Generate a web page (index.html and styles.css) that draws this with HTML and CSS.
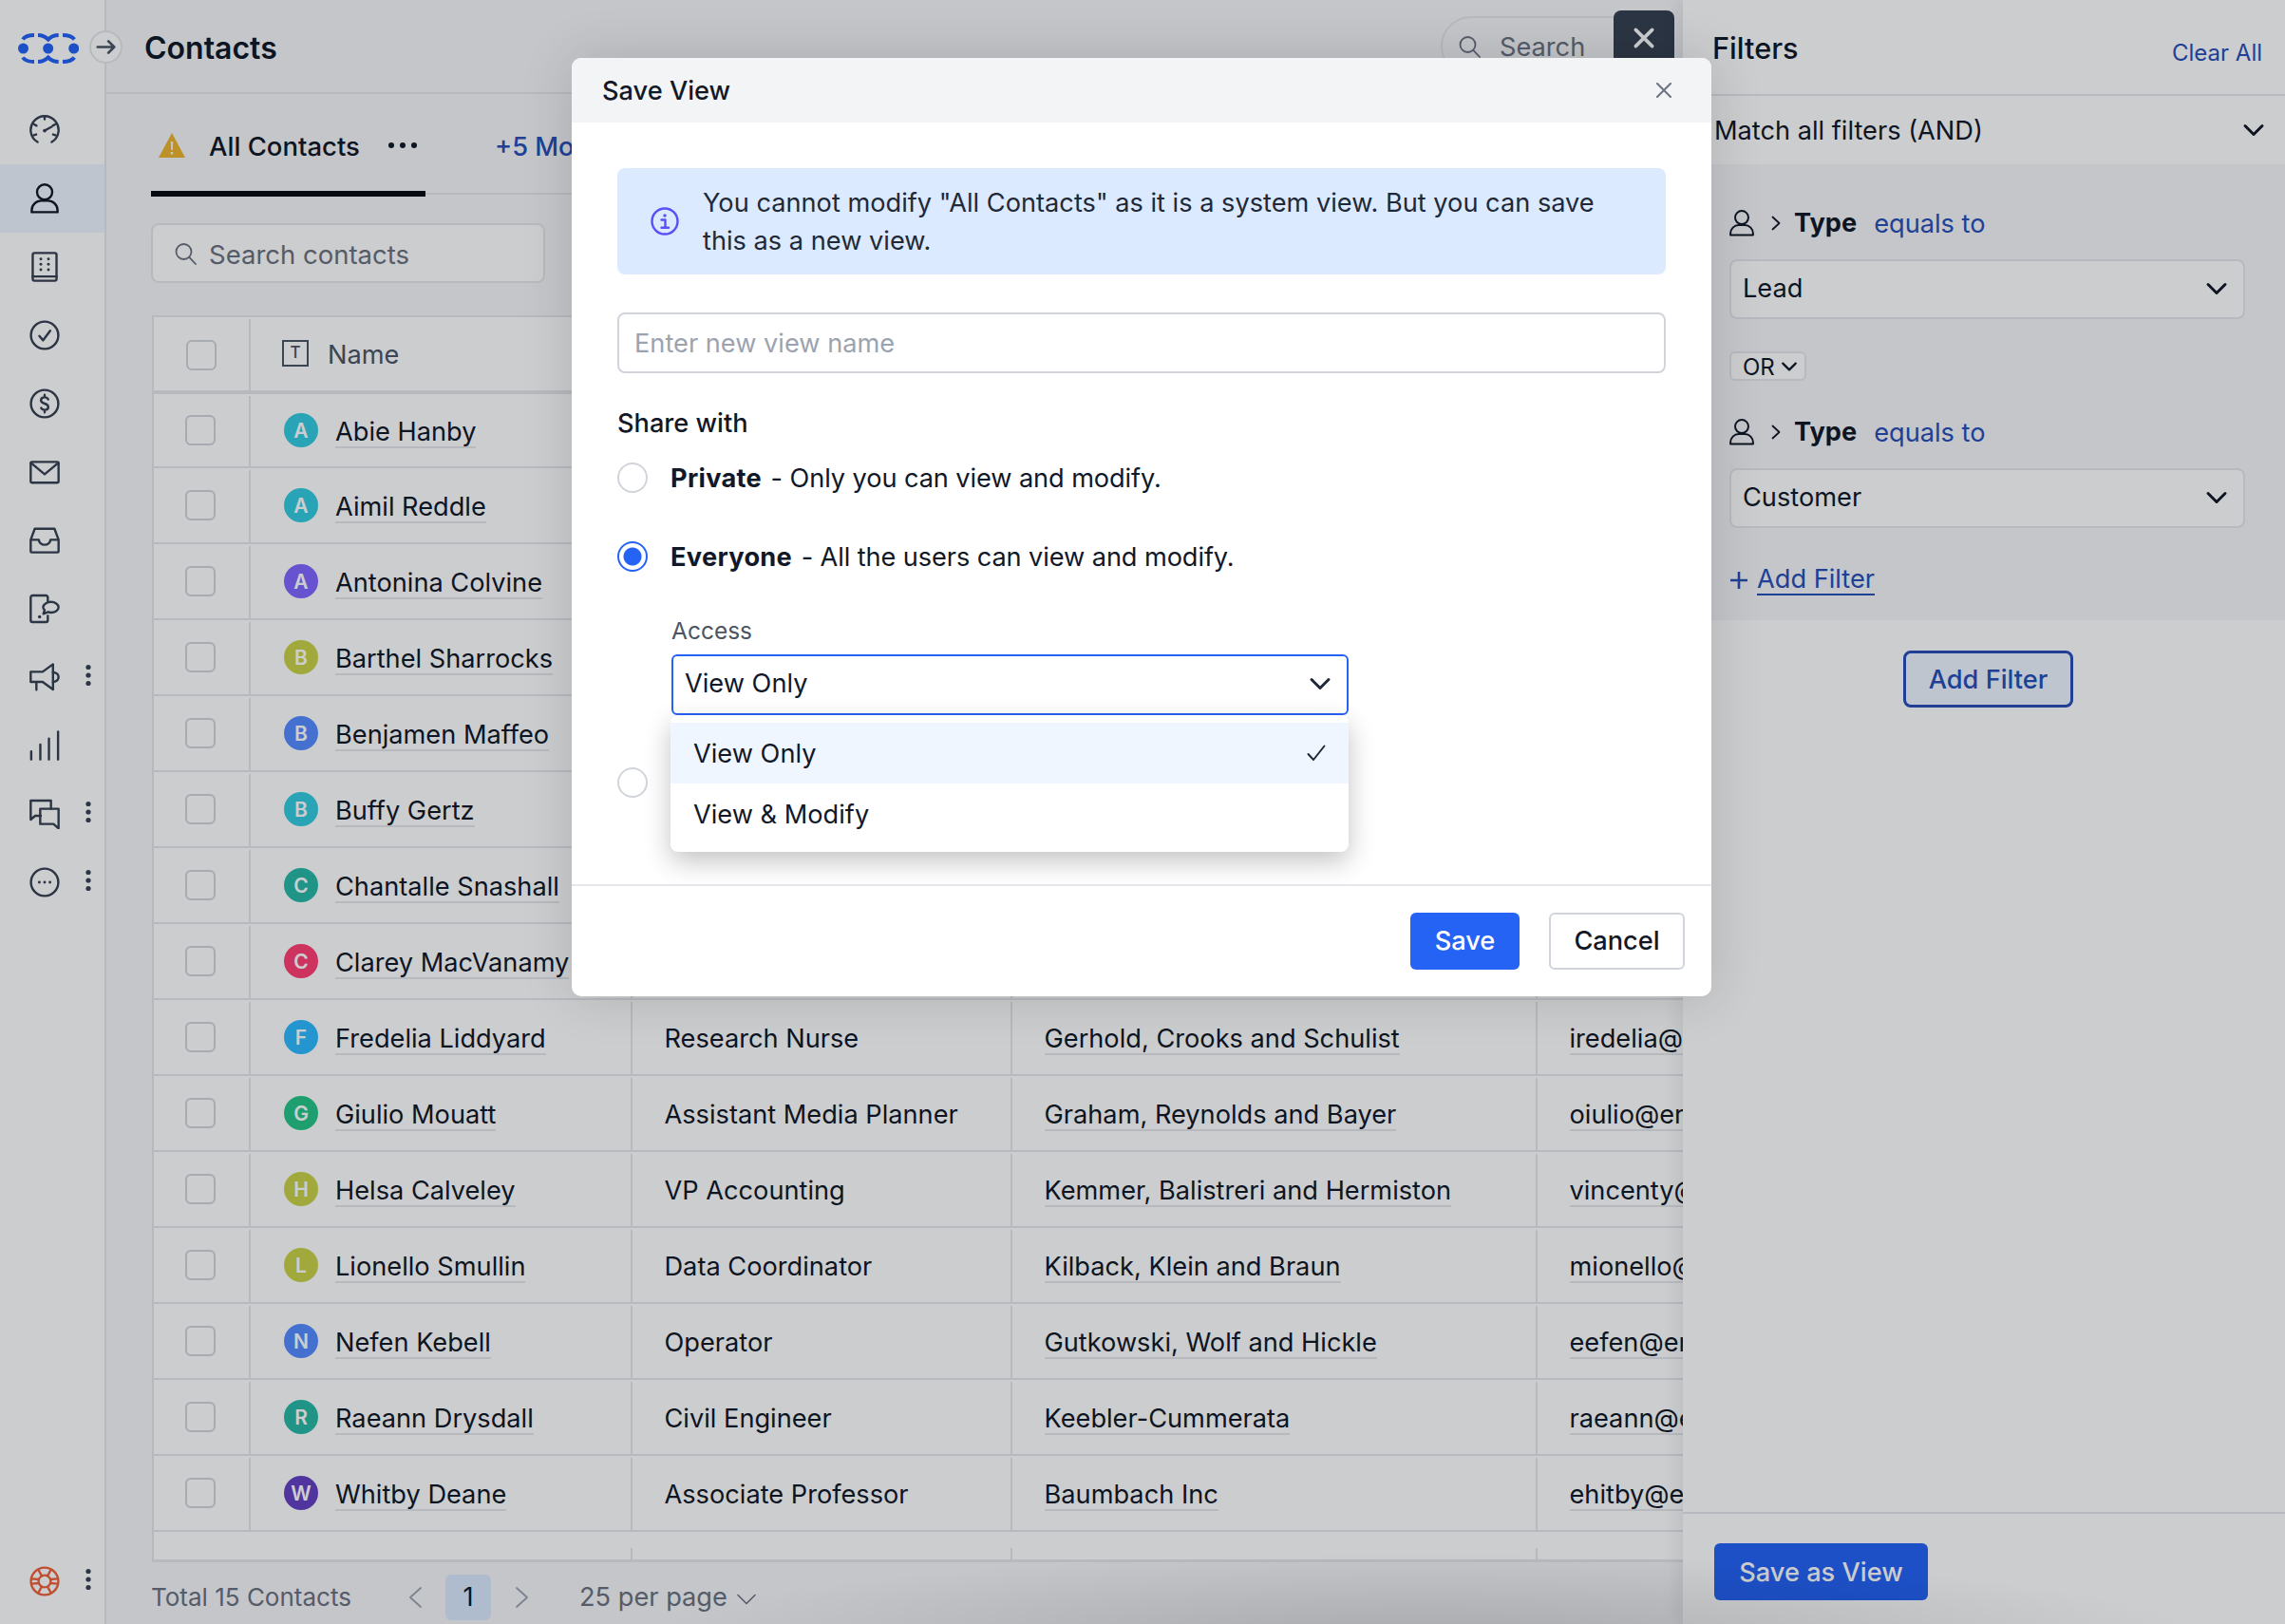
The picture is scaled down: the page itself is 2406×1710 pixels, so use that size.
FILE: index.html
```html
<!DOCTYPE html>
<html lang="en">
<head>
<meta charset="utf-8">
<title>Contacts</title>
<link rel="stylesheet" href="styles.css">
</head>
<body>
<svg class="defs" aria-hidden="true">
  <symbol id="i-gauge" viewBox="0 0 24 24"><path d="M6.400 21.400A11 11 0 1 1 17.600 21.400"/><path d="M12 1v2.400M3.800 7.500l1.800 1M20.200 7.500l-1.800 1M3.400 16l1.900-.6M20.600 16l-1.900-.6M12 12.400l5.500-3"/><circle cx="12" cy="12.400" r="1.400" class="fill"/></symbol>
  <symbol id="i-person" viewBox="0 0 24 24"><circle cx="12" cy="6.900" r="6"/><path d="M1.800 22.800h20.400v-1.500a7.500 7.500 0 0 0-7.500-7.500H9.300a7.500 7.500 0 0 0-7.500 7.500z"/></symbol>
  <symbol id="i-building" viewBox="0 0 24 24"><rect x="2.600" y="1" width="18.800" height="22" rx="1.400"/><path d="M2.600 19.600h18.800"/><circle cx="9" cy="5.800" r="1.100" class="fill"/><circle cx="15" cy="5.800" r="1.100" class="fill"/><circle cx="9" cy="10" r="1.100" class="fill"/><circle cx="15" cy="10" r="1.100" class="fill"/><circle cx="9" cy="14.200" r="1.100" class="fill"/><circle cx="15" cy="14.200" r="1.100" class="fill"/></symbol>
  <symbol id="i-check" viewBox="0 0 24 24"><circle cx="12" cy="12" r="10.800"/><path d="M7.800 12.600l3 3.400 5.600-7.600"/></symbol>
  <symbol id="i-dollar" viewBox="0 0 24 24"><circle cx="12" cy="12" r="10.800"/><path d="M14.800 8.600c-.5-1-1.500-1.600-2.800-1.600-1.600 0-2.900.9-2.900 2.400 0 3.300 5.800 1.900 5.800 5.200 0 1.500-1.300 2.400-2.900 2.400-1.300 0-2.300-.6-2.800-1.600M12 5v2m0 10v2"/></symbol>
  <symbol id="i-mail" viewBox="0 0 24 24"><rect x="1" y="4" width="22" height="16.400" rx="1"/><path d="M1.200 4.800 12 13.800 22.800 4.800"/></symbol>
  <symbol id="i-inbox" viewBox="0 0 24 24"><path d="M1 11.500 4.200 2.800h15.600l3.200 8.700v9a1 1 0 0 1-1 1H2a1 1 0 0 1-1-1zM1 11.500h6.400c0 2.200 2.100 4 4.600 4s4.600-1.800 4.600-4H23"/></symbol>
  <symbol id="i-phone" viewBox="0 0 24 24"><path d="M14.500 6V3a1.500 1.500 0 0 0-1.500-1.500H2.500A1.500 1.500 0 0 0 1 3v18a1.500 1.500 0 0 0 1.500 1.500H13a1.500 1.500 0 0 0 1.500-1.500v-3.500"/><path d="M17 6.600c3.100 0 6 1.800 6 4.200S20.100 15 17 15c-.8 0-1.500-.1-2.200-.4L11 16l1-3c-.7-.7-1.200-1.500-1.200-2.200 0-2.400 3.100-4.200 6.200-4.200z"/><circle cx="8" cy="18.400" r="1.300" class="fill"/></symbol>
  <symbol id="i-mega" viewBox="0 0 24 24"><path d="M1 7.800h9.400l8.200-6v20l-8.200-6H1z"/><path d="M5.500 16v6M18.600 8c2.800.6 4.400 2.200 4.400 4s-1.600 3.400-4.400 4"/></symbol>
  <symbol id="i-bars" viewBox="0 0 24 24"><path d="M1.400 23v-6.400M8.600 23V11.300M15.400 23V6.600M22.600 23V1"/></symbol>
  <symbol id="i-chat" viewBox="0 0 24 24"><path d="M17 8V1.500H1v15l3.500-3H9"/><path d="M8.500 8H23v15.500L19 20H8.500z"/></symbol>
  <symbol id="i-more" viewBox="0 0 24 24"><circle cx="12" cy="12" r="10.800"/><circle cx="7.800" cy="12" r="1.100" class="fill"/><circle cx="12" cy="12" r="1.100" class="fill"/><circle cx="16.200" cy="12" r="1.100" class="fill"/></symbol>
  <symbol id="i-help" viewBox="0 0 24 24"><circle cx="12" cy="12" r="10.800"/><circle cx="12" cy="12" r="4.800"/><path d="M9.700 7.800 7 2.800M14.300 7.800 17 2.800M9.700 16.200 7 21.200M14.300 16.200 17 21.200M7.400 10.500 1.800 10M7.400 13.500 1.800 14M16.600 10.500 22.200 10M16.600 13.500 22.200 14"/></symbol>
  <symbol id="i-search" viewBox="0 0 24 24"><circle cx="10.500" cy="10" r="8"/><path d="M16.300 15.800 23 23"/></symbol>
  <symbol id="i-down" viewBox="0 0 24 24"><path d="M3 7.500l9 9 9-9"/></symbol>
  <symbol id="i-kebab" viewBox="0 0 8 24"><circle cx="4" cy="3.500" r="2.600" class="fill"/><circle cx="4" cy="12" r="2.600" class="fill"/><circle cx="4" cy="20.500" r="2.600" class="fill"/></symbol>
</svg>

<div class="app">
  <aside class="sidebar">
    <div class="brand">
      <svg class="logo" viewBox="0 0 64 32"><path class="logo-ring" d="M5 6.500Q8 2 17 2M21 2Q27 2 31.700 6.500 36 2 42.700 2M47 2Q56 2 59.300 6.500M5 25.500Q8 30 17 30M21 30Q27 30 31.700 25.500 36 30 42.700 30M47 30Q56 30 59.300 25.500"/><circle cx="5.500" cy="16" r="5.500"/><circle cx="31.700" cy="16" r="5.500"/><circle cx="58.700" cy="16" r="5.500"/></svg>
      <span class="expander"><svg viewBox="0 0 24 24"><path d="M2 12h20M15 5l7 7-7 7"/></svg></span>
    </div>
    <nav class="nav">
      <a class="nav-item"><svg class="icon"><use href="#i-gauge"/></svg></a>
      <a class="nav-item active"><svg class="icon"><use href="#i-person"/></svg></a>
      <a class="nav-item"><svg class="icon"><use href="#i-building"/></svg></a>
      <a class="nav-item"><svg class="icon"><use href="#i-check"/></svg></a>
      <a class="nav-item"><svg class="icon"><use href="#i-dollar"/></svg></a>
      <a class="nav-item"><svg class="icon"><use href="#i-mail"/></svg></a>
      <a class="nav-item"><svg class="icon"><use href="#i-inbox"/></svg></a>
      <a class="nav-item"><svg class="icon"><use href="#i-phone"/></svg></a>
      <a class="nav-item"><svg class="icon"><use href="#i-mega"/></svg><svg class="kebab"><use href="#i-kebab"/></svg></a>
      <a class="nav-item"><svg class="icon"><use href="#i-bars"/></svg></a>
      <a class="nav-item"><svg class="icon"><use href="#i-chat"/></svg><svg class="kebab"><use href="#i-kebab"/></svg></a>
      <a class="nav-item"><svg class="icon"><use href="#i-more"/></svg><svg class="kebab"><use href="#i-kebab"/></svg></a>
    </nav>
    <a class="nav-item help"><svg class="icon help-icon"><use href="#i-help"/></svg><svg class="kebab"><use href="#i-kebab"/></svg></a>
  </aside>

  <main class="main">
    <header class="topbar">
      <h1 class="page-title">Contacts</h1>
      <div class="top-actions">
        <div class="pill-search"><svg class="pill-icon"><use href="#i-search"/></svg><span>Search</span></div>
        <button class="close-dark"><svg viewBox="0 0 24 24"><path d="M4 4l16 16M20 4 4 20"/></svg></button>
      </div>
    </header>

    <div class="tabs">
      <div class="tab">
        <svg class="warn" viewBox="0 0 28 26"><path d="M14 0 28 26H0z" class="warn-bg"/><path d="M12.800 9h2.400l-.4 9h-1.600zM12.800 20h2.400v2.600h-2.400z" class="warn-fg"/></svg>
        <span class="tab-label">All Contacts</span>
        <span class="tab-dots"><i></i><i></i><i></i></span>
      </div>
      <span class="tab-more">+5 More</span>
    </div>

    <div class="search-box"><svg class="search-icon"><use href="#i-search"/></svg><span>Search contacts</span></div>

    <section class="table">
      <div class="row head">
        <div class="cell cell-check"><span class="cb"></span></div>
        <div class="cell cell-name"><span class="t-icon">T</span><span>Name</span></div>
        <div class="cell"></div><div class="cell"></div><div class="cell"></div>
      </div>
      <div class="row first"><div class="cell cell-check"><span class="cb"></span></div><div class="cell cell-name"><span class="av c-teal">A</span><a class="lnk">Abie Hanby</a></div><div class="cell"></div><div class="cell"></div><div class="cell"></div></div>
      <div class="row"><div class="cell cell-check"><span class="cb"></span></div><div class="cell cell-name"><span class="av c-teal">A</span><a class="lnk">Aimil Reddle</a></div><div class="cell"></div><div class="cell"></div><div class="cell"></div></div>
      <div class="row"><div class="cell cell-check"><span class="cb"></span></div><div class="cell cell-name"><span class="av c-purple">A</span><a class="lnk">Antonina Colvine</a></div><div class="cell"></div><div class="cell"></div><div class="cell"></div></div>
      <div class="row"><div class="cell cell-check"><span class="cb"></span></div><div class="cell cell-name"><span class="av c-olive">B</span><a class="lnk">Barthel Sharrocks</a></div><div class="cell"></div><div class="cell"></div><div class="cell"></div></div>
      <div class="row"><div class="cell cell-check"><span class="cb"></span></div><div class="cell cell-name"><span class="av c-blue">B</span><a class="lnk">Benjamen Maffeo</a></div><div class="cell"></div><div class="cell"></div><div class="cell"></div></div>
      <div class="row"><div class="cell cell-check"><span class="cb"></span></div><div class="cell cell-name"><span class="av c-teal">B</span><a class="lnk">Buffy Gertz</a></div><div class="cell"></div><div class="cell"></div><div class="cell"></div></div>
      <div class="row"><div class="cell cell-check"><span class="cb"></span></div><div class="cell cell-name"><span class="av c-green">C</span><a class="lnk">Chantalle Snashall</a></div><div class="cell"></div><div class="cell"></div><div class="cell"></div></div>
      <div class="row"><div class="cell cell-check"><span class="cb"></span></div><div class="cell cell-name"><span class="av c-red">C</span><a class="lnk">Clarey MacVanamy</a></div><div class="cell"></div><div class="cell"></div><div class="cell"></div></div>
      <div class="row"><div class="cell cell-check"><span class="cb"></span></div><div class="cell cell-name"><span class="av c-sky">F</span><a class="lnk">Fredelia Liddyard</a></div><div class="cell">Research Nurse</div><div class="cell"><a class="lnk">Gerhold, Crooks and Schulist</a></div><div class="cell"><a class="lnk">iredelia@erdman.com</a></div></div>
      <div class="row"><div class="cell cell-check"><span class="cb"></span></div><div class="cell cell-name"><span class="av c-emerald">G</span><a class="lnk">Giulio Mouatt</a></div><div class="cell">Assistant Media Planner</div><div class="cell"><a class="lnk">Graham, Reynolds and Bayer</a></div><div class="cell"><a class="lnk">oiulio@erdman.com</a></div></div>
      <div class="row"><div class="cell cell-check"><span class="cb"></span></div><div class="cell cell-name"><span class="av c-olive">H</span><a class="lnk">Helsa Calveley</a></div><div class="cell">VP Accounting</div><div class="cell"><a class="lnk">Kemmer, Balistreri and Hermiston</a></div><div class="cell"><a class="lnk">vincenty@erdman.com</a></div></div>
      <div class="row"><div class="cell cell-check"><span class="cb"></span></div><div class="cell cell-name"><span class="av c-olive">L</span><a class="lnk">Lionello Smullin</a></div><div class="cell">Data Coordinator</div><div class="cell"><a class="lnk">Kilback, Klein and Braun</a></div><div class="cell"><a class="lnk">mionello@erdman.com</a></div></div>
      <div class="row"><div class="cell cell-check"><span class="cb"></span></div><div class="cell cell-name"><span class="av c-blue">N</span><a class="lnk">Nefen Kebell</a></div><div class="cell">Operator</div><div class="cell"><a class="lnk">Gutkowski, Wolf and Hickle</a></div><div class="cell"><a class="lnk">eefen@erdman.com</a></div></div>
      <div class="row"><div class="cell cell-check"><span class="cb"></span></div><div class="cell cell-name"><span class="av c-green">R</span><a class="lnk">Raeann Drysdall</a></div><div class="cell">Civil Engineer</div><div class="cell"><a class="lnk">Keebler-Cummerata</a></div><div class="cell"><a class="lnk">raeann@erdman.com</a></div></div>
      <div class="row"><div class="cell cell-check"><span class="cb"></span></div><div class="cell cell-name"><span class="av c-violet">W</span><a class="lnk">Whitby Deane</a></div><div class="cell">Associate Professor</div><div class="cell"><a class="lnk">Baumbach Inc</a></div><div class="cell"><a class="lnk">ehitby@erdman.com</a></div></div>
      <div class="row blank"><div class="stub"></div><div class="stub on"></div><div class="stub on"></div><div class="stub on"></div><div class="stub"></div></div>
    </section>

    <footer class="pager">
      <span class="total">Total 15 Contacts</span>
      <svg class="pg-chev prev" viewBox="0 0 15 22"><path d="M13 1 2 11l11 10"/></svg>
      <span class="page-num">1</span>
      <svg class="pg-chev next" viewBox="0 0 15 22"><path d="M2 1l11 10L2 21"/></svg>
      <span class="per-page">25 per page</span>
      <svg class="pp-chev"><use href="#i-down"/></svg>
    </footer>
  </main>

  <aside class="panel">
    <div class="panel-head"><span class="panel-title">Filters</span><a class="clear">Clear All</a></div>
    <div class="match"><span>Match all filters (AND)</span><svg class="chev"><use href="#i-down"/></svg></div>
    <div class="group">
      <div class="frow"><svg class="f-person"><use href="#i-person"/></svg><svg class="f-gt" viewBox="0 0 10 16"><path d="M1.500 1.500 8.500 8l-7 6.500"/></svg><b class="f-type">Type</b><span class="f-op">equals to</span></div>
      <div class="fselect"><span>Lead</span><svg class="chev"><use href="#i-down"/></svg></div>
      <div class="or"><span>OR</span><svg class="or-chev"><use href="#i-down"/></svg></div>
      <div class="frow second"><svg class="f-person"><use href="#i-person"/></svg><svg class="f-gt" viewBox="0 0 10 16"><path d="M1.500 1.500 8.500 8l-7 6.500"/></svg><b class="f-type">Type</b><span class="f-op">equals to</span></div>
      <div class="fselect"><span>Customer</span><svg class="chev"><use href="#i-down"/></svg></div>
      <div class="add-link"><svg class="plus" viewBox="0 0 20 20"><path d="M10 1v18M1 10h18"/></svg><a>Add Filter</a></div>
    </div>
    <button class="add-btn">Add Filter</button>
    <div class="panel-foot"><button class="save-as">Save as View</button></div>
  </aside>
</div>

<div class="scrim"><div class="scrim-shade"></div></div>

<div class="modal">
  <div class="modal-head"><span>Save View</span><svg class="modal-x" viewBox="0 0 16 16"><path d="M1 1l14 14M15 1 1 15"/></svg></div>
  <div class="modal-body">
    <div class="notice">
      <svg class="info" viewBox="0 0 30 30"><circle cx="15" cy="15" r="13.500"/><circle cx="15" cy="9" r="1.700" class="info-dot"/><path d="M11.500 13.500H15.500V21.500M11.500 21.800H19"/></svg>
      <p>You cannot modify "All Contacts" as it is a system view. But you can save<br>this as a new view.</p>
    </div>
    <div class="name-input">Enter new view name</div>
    <div class="share">Share with</div>
    <div class="opt opt-private"><span class="radio"></span><span class="opt-text"><b>Private</b> - Only you can view and modify.</span></div>
    <div class="opt opt-everyone"><span class="radio on"></span><span class="opt-text"><b>Everyone</b> - All the users can view and modify.</span></div>
    <div class="access">
      <div class="access-label">Access</div>
      <div class="access-select"><span>View Only</span><svg class="chev strong"><use href="#i-down"/></svg>
        <div class="menu">
          <div class="menu-item selected"><span>View Only</span><svg class="tick" viewBox="0 0 20 20"><path d="M1.500 11 7 17 18.500 2.500"/></svg></div>
          <div class="menu-item"><span>View &amp; Modify</span></div>
        </div>
      </div>
    </div>
    <div class="opt opt-third"><span class="radio"></span></div>
  </div>
  <div class="modal-foot"><button class="btn-save">Save</button><button class="btn-cancel">Cancel</button></div>
</div>
</body>
</html>
```

FILE: styles.css
```css
* { box-sizing: border-box; }
html, body { margin: 0; padding: 0; }
body {
  position: relative;
  width: 2406px;
  height: 1710px;
  overflow: hidden;
  background: #fff;
  color: #111827;
  font-family: Inter, "Liberation Sans", sans-serif;
  font-size: 27.2px;
  line-height: 40px;
}
h1, p { margin: 0; font: inherit; }
button { font: inherit; cursor: pointer; }
.defs { position: absolute; width: 0; height: 0; }
symbol { fill: none; stroke: currentColor; stroke-width: var(--sw, 1.8); stroke-linecap: round; stroke-linejoin: round; }
.fill { fill: currentColor; stroke: none; }
svg { display: block; flex: none; }

.app { display: flex; height: 1710px; }

/* sidebar */
.sidebar {
  position: relative;
  z-index: 2;
  display: flex;
  flex-direction: column;
  width: 112px;
  flex: none;
  background: #fff;
  border-right: 2px solid #e5e7eb;
  color: #374151;
}
.brand { position: relative; height: 101px; }
.logo { position: absolute; left: 19px; top: 35px; width: 64px; height: 32px; fill: #2563f5; }
.logo-ring { fill: none; stroke: #2563f5; stroke-width: 4; }
.expander {
  position: absolute;
  left: 94px;
  top: 32px;
  display: flex;
  align-items: center;
  justify-content: center;
  width: 35px;
  height: 35px;
  border: 2px solid #e5e7eb;
  border-radius: 50%;
  background: #fff;
}
.expander svg { width: 21px; height: 21px; fill: none; stroke: #4b5563; stroke-width: 3; stroke-linecap: round; stroke-linejoin: round; }
.nav-item { display: flex; align-items: center; height: 72px; padding-left: 31px; }
.nav-item.active { background: #eff6ff; color: #111827; }
.icon { width: 32px; height: 32px; }
.kebab { width: 8px; height: 24px; margin-left: 26px; margin-top: -5px; color: #374151; }
.help { margin-top: auto; margin-bottom: 9px; }
.help-icon { color: #f0623a; }

/* main */
.main { flex: 1; min-width: 0; overflow: hidden; background: #f6f7f9; }
.topbar {
  display: flex;
  justify-content: space-between;
  height: 99px;
  padding-left: 40px;
  padding-right: 9px;
  border-bottom: 2px solid #e5e7eb;
}
.page-title { align-self: center; padding-top: 4px; font-size: 32px; font-weight: 600; line-height: 40px; }
.top-actions { display: flex; align-items: flex-start; padding-top: 11px; }
.pill-search {
  display: flex;
  align-items: center;
  gap: 20px;
  width: 220px;
  height: 64px;
  margin-top: 6px;
  padding-left: 16px;
  border: 2px solid #e5e7eb;
  border-radius: 32px;
  color: #6b7280;
}
.pill-search span { padding-top: 2px; }
.pill-icon { width: 24px; height: 24px; }
.close-dark {
  display: flex;
  align-items: center;
  justify-content: center;
  position: relative;
  width: 64px;
  height: 64px;
  margin-left: -38px;
  padding: 0;
  border: 0;
  border-radius: 8px;
  background: #374151;
}
.close-dark svg { width: 26px; height: 26px; margin-top: -6px; fill: none; stroke: #fff; stroke-width: 3.4; stroke-linecap: round; }

.tabs { display: flex; height: 106px; margin-left: 47px; border-bottom: 2px solid #e5e7eb; }
.tab {
  display: flex;
  align-items: center;
  width: 289px;
  height: 108px;
  padding: 6px 0 0 8px;
  border-bottom: 6px solid #0b0c12;
}
.warn { width: 28px; height: 26px; }
.warn-bg { fill: #edb52f; }
.warn-fg { fill: #f6f7f9; }
.tab-label { margin-left: 25px; padding-top: 2px; font-size: 27.5px; font-weight: 500; }
.tab-dots { display: flex; gap: 6px; margin-left: 30px; }
.tab-dots i { width: 6px; height: 6px; border-radius: 50%; background: #111827; }
.tab-more { align-self: center; padding-top: 8px; margin-left: 73px; color: #274fb7; font-weight: 500; white-space: nowrap; }

.search-box {
  display: flex;
  align-items: center;
  gap: 13px;
  width: 415px;
  height: 63px;
  margin: 30px 0 0 47px;
  padding-left: 22px;
  border: 2px solid #e5e7eb;
  border-radius: 8px;
  background: #fff;
  color: #6b7280;
  font-size: 27.5px;
}
.search-box span { margin-top: 3px; }
.search-icon { width: 24px; height: 24px; }

/* table */
.table { width: 2460px; margin: 34px 0 0 48px; border-left: 2px solid #e5e7eb; border-top: 2px solid #e5e7eb; background: #fff; }
.row {
  display: grid;
  grid-template-columns: 102px 401.5px 400px 553px 1001.5px;
  height: 80px;
  border-bottom: 2px solid #e5e7eb;
}
.row.head { height: 81px; border-bottom-width: 4px; color: #4b5563; }
.row.first { height: 78px; }
.cell {
  display: flex;
  align-items: center;
  margin: 2px 0 0;
  padding: 2px 0 0 34px;
  border-right: 2px solid #e5e7eb;
  white-space: nowrap;
  overflow: hidden;
}
.cell:last-child { border-right: 0; }
.cell-check { padding-left: 33px; }
.cell-name { padding-left: 35px; }
.cb { width: 32px; height: 32px; margin-top: -4px; border: 2px solid #d1d5db; border-radius: 6px; background: #fff; }
.row.head .cb { margin-top: -2px; margin-left: 1px; }
.t-icon {
  display: flex;
  align-items: center;
  justify-content: center;
  width: 28px;
  height: 28px;
  margin: -4px 20px 0 -2px;
  border: 2px solid #4b5563;
  font-size: 17px;
  font-weight: 500;
  line-height: 1;
}
.row.head .cell-name { padding-top: 0; }
.av {
  display: flex;
  flex: none;
  align-items: center;
  justify-content: center;
  width: 36px;
  height: 36px;
  margin: -4px 18px 0 0;
  border-radius: 50%;
  color: #fff;
  font-size: 21px;
  font-weight: 600;
  line-height: 1;
}
.c-teal { background: #34cce0; }
.c-purple { background: #8167ff; }
.c-olive { background: #cad148; }
.c-blue { background: #558dff; }
.c-green { background: #29b8a6; }
.c-red { background: #ff3f72; }
.c-sky { background: #2fb9ff; }
.c-emerald { background: #27c687; }
.c-violet { background: #6641c2; }
.lnk { display: block; margin-top: 1px; line-height: 30px; border-bottom: 2px solid #e5e7eb; }
.row.blank { height: 32px; border-bottom-width: 3px; }
.stub { border-right: 2px solid transparent; margin-top: 17px; }
.stub.on { border-right-color: #e5e7eb; }

.pager { display: flex; align-items: center; height: 65px; margin-left: 47px; padding-top: 8px; color: #6b7280; }
.total { width: 210px; font-size: 26px; white-space: nowrap; }
.pg-chev { width: 15px; height: 22px; fill: none; stroke: #9ca3af; stroke-width: 1.8; stroke-linecap: round; stroke-linejoin: round; }
.prev { margin-left: 61px; }
.page-num {
  display: flex;
  align-items: center;
  justify-content: center;
  width: 48px;
  height: 48px;
  margin-left: 24px;
  border-radius: 6px;
  background: #dbeafe;
  color: #111827;
}
.next { margin-left: 25px; }
.per-page { margin-left: 53px; }
.pp-chev { width: 24px; height: 24px; margin-left: 8px; margin-top: 4px; color: #6b7280; --sw: 1.6; }

/* filter panel */
.panel {
  position: relative;
  z-index: 3;
  display: flex;
  flex-direction: column;
  width: 634px;
  flex: none;
  background: #fff;
  box-shadow: -6px 0 16px rgba(17, 24, 39, .08);
}
.panel-head {
  display: flex;
  justify-content: space-between;
  align-items: center;
  height: 101px;
  padding: 0 24px 0 31px;
  border-bottom: 2px solid #e5e7eb;
}
.panel-title { padding-top: 2px; font-size: 30.7px; font-weight: 500; }
.clear { margin-top: 12px; color: #274fb7; font-size: 24px; }
.match { display: flex; justify-content: space-between; align-items: center; height: 72px; padding: 0 21px 0 33px; }
.match span { padding-top: 2px; }
.chev { width: 24px; height: 24px; color: #111827; --sw: 3; }
.group { height: 480px; padding: 44px 42px 0 49px; background: #f6f7f9; }
.frow { display: flex; align-items: center; height: 36px; }
.frow.second { margin-top: 36px; }
.f-person { width: 28px; height: 28px; color: #111827; margin-left: -1px; --sw: 1.7; }
.f-gt { width: 10px; height: 16px; margin-left: 17px; fill: none; stroke: #111827; stroke-width: 1.8; stroke-linecap: round; stroke-linejoin: round; }
.f-type { margin-left: 14px; font-weight: 700; }
.f-op { margin-left: 18px; padding-top: 2px; color: #274fb7; }
.fselect {
  display: flex;
  justify-content: space-between;
  align-items: center;
  height: 63px;
  margin-top: 20px;
  padding: 0 16px 2px 12px;
  border: 2px solid #e5e7eb;
  border-radius: 8px;
  background: #fff;
}
.or {
  display: flex;
  align-items: center;
  gap: 6px;
  width: 81px;
  height: 31px;
  margin-top: 34px;
  padding-left: 12px;
  border: 2px solid #e5e7eb;
  border-radius: 6px;
  background: #fff;
  font-size: 24px;
}
.or span { padding-top: 3px; }
.or-chev { width: 18px; height: 18px; --sw: 3; }
.add-link { display: flex; align-items: center; height: 36px; margin-top: 37px; color: #274fb7; }
.plus { width: 20px; height: 20px; margin-right: 9px; fill: none; stroke: #274fb7; stroke-width: 2.6; }
.add-link a { line-height: 30px; border-bottom: 2px solid #274fb7; }
.add-btn {
  align-self: flex-start;
  width: 179px;
  height: 60px;
  margin: 32px 0 0 232px;
  padding: 2px 0 0;
  border: 3px solid #274fb7;
  border-radius: 8px;
  background: #eff6ff;
  color: #274fb7;
  font-weight: 500;
}
.panel-foot { margin-top: auto; height: 118px; padding: 31px 0 0 33px; border-top: 2px solid #e5e7eb; }
.save-as {
  width: 225px;
  height: 60px;
  padding: 1px 0 0;
  border: 0;
  border-radius: 6px;
  background: #2563f5;
  color: #fff;
  font-weight: 500;
}

/* overlay */
.scrim { position: absolute; inset: 0; z-index: 10; background: rgba(0, 5, 15, .2); }
.scrim-shade {
  position: absolute;
  inset: 0;
  background: radial-gradient(ellipse 820px 90px at 1500px 1725px, rgba(0, 0, 0, .14), rgba(0, 0, 0, 0));
}

/* modal */
.modal {
  position: absolute;
  left: 602px;
  top: 61px;
  z-index: 20;
  display: flex;
  flex-direction: column;
  width: 1200px;
  height: 988px;
  border-radius: 10px;
  background: #fff;
  box-shadow: 0 0 56px rgba(0, 0, 0, .14);
  overflow: visible;
}
.modal-head {
  display: flex;
  justify-content: space-between;
  align-items: center;
  height: 68px;
  flex: none;
  padding: 0 42px 0 32px;
  border-radius: 10px 10px 0 0;
  background: #f3f4f6;
  font-weight: 500;
}
.modal-head span { padding-top: 2px; }
.modal-x { width: 16px; height: 16px; fill: none; stroke: #6b7280; stroke-width: 2; stroke-linecap: round; }
.modal-body { padding: 48px 48px 0; }
.notice {
  display: flex;
  align-items: center;
  gap: 25px;
  width: 1104px;
  height: 112px;
  padding-left: 35px;
  border-radius: 8px;
  background: #dbeafe;
  color: #1f2937;
}
.notice p { padding-top: 2px; }
.info { width: 30px; height: 30px; fill: none; stroke: #5b4ff5; stroke-width: 2.400; stroke-linecap: round; stroke-linejoin: round; }
.info-dot { fill: #5b4ff5; stroke: none; }
.name-input {
  display: flex;
  align-items: center;
  width: 1104px;
  height: 64px;
  margin-top: 40px;
  padding: 2px 0 0 16px;
  border: 2px solid #d1d5db;
  border-radius: 8px;
  color: #9ca3af;
}
.share { margin-top: 32px; padding-top: 1px; height: 40px; font-weight: 500; }
.opt { display: flex; align-items: center; height: 40px; gap: 24px; }
.opt-text { padding-top: 2px; letter-spacing: -.1px; }
.opt b { margin-right: 2px; font-weight: 700; letter-spacing: .3px; }
.opt-private { margin-top: 18px; }
.opt-everyone { margin-top: 43px; }
.opt-third { margin-top: 51px; }
.radio { width: 32px; height: 32px; flex: none; border: 2px solid #d1d5db; border-radius: 50%; background: #fff; }
.radio.on { border-color: #2563f5; background: radial-gradient(circle, #2563f5 0 9px, #fff 10px); }
.access { padding-left: 57px; margin-top: 38px; }
.access-label { color: #4b5563; font-size: 24.5px; }
.access-select {
  position: relative;
  display: flex;
  justify-content: space-between;
  align-items: center;
  width: 713px;
  height: 64px;
  margin-top: 5px;
  padding: 0 16px 2px 12px;
  border: 2px solid #2563f5;
  border-radius: 6px;
}
.chev.strong { --sw: 3; color: #1f2937; }
.menu {
  position: absolute;
  left: -3px;
  top: calc(100% + 2px);
  z-index: 1;
  width: 714px;
  height: 144px;
  padding: 8px 0;
  border-radius: 8px;
  background: #fff;
  box-shadow: 0 10px 28px rgba(0, 0, 0, .24);
}
.menu-item { display: flex; justify-content: space-between; align-items: center; height: 64px; padding: 0 24px 0 24px; }
.menu-item span { padding-top: 2px; }
.menu-item.selected { background: #eff6ff; }
.tick { width: 20px; height: 20px; fill: none; stroke: #1f2937; stroke-width: 2; stroke-linecap: round; stroke-linejoin: round; }
.modal-foot {
  display: flex;
  justify-content: flex-end;
  gap: 31px;
  height: 118px;
  margin-top: auto;
  padding: 28px 28px 0 0;
  border-top: 2px solid #e5e7eb;
}
.btn-save { width: 115px; height: 60px; padding: 0; border: 0; border-radius: 6px; background: #2563f5; color: #fff; font-weight: 500; }
.btn-cancel { width: 143px; height: 60px; padding: 0; border: 2px solid #d1d5db; border-radius: 6px; background: #fff; color: #111827; font-weight: 500; }
```
